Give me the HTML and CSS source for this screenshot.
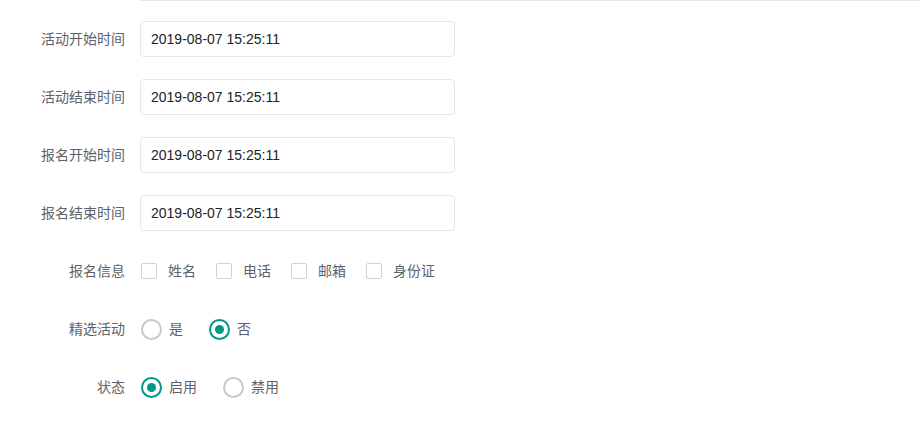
FILE: index.html
```html
<!DOCTYPE html>
<html lang="zh-CN">
<head>
<meta charset="utf-8">
<title>活动表单</title>
<link rel="stylesheet" href="styles.css">
</head>
<body>
<div class="form">
  <div class="prev-row"><div class="prev-input"></div></div>

  <div class="row">
    <label class="label">活动开始时间</label>
    <div class="field"><div class="input">2019-08-07 15:25:11</div></div>
  </div>
  <div class="row">
    <label class="label">活动结束时间</label>
    <div class="field"><div class="input">2019-08-07 15:25:11</div></div>
  </div>
  <div class="row">
    <label class="label">报名开始时间</label>
    <div class="field"><div class="input">2019-08-07 15:25:11</div></div>
  </div>
  <div class="row">
    <label class="label">报名结束时间</label>
    <div class="field"><div class="input">2019-08-07 15:25:11</div></div>
  </div>

  <div class="row">
    <label class="label">报名信息</label>
    <div class="field options check-group">
      <span class="check"><span class="box"></span><span class="opt-text">姓名</span></span>
      <span class="check"><span class="box"></span><span class="opt-text">电话</span></span>
      <span class="check"><span class="box"></span><span class="opt-text">邮箱</span></span>
      <span class="check"><span class="box"></span><span class="opt-text">身份证</span></span>
    </div>
  </div>

  <div class="row">
    <label class="label">精选活动</label>
    <div class="field options radio-group">
      <span class="radio"><span class="circle"></span><span class="opt-text">是</span></span>
      <span class="radio on"><span class="circle"></span><span class="opt-text">否</span></span>
    </div>
  </div>

  <div class="row">
    <label class="label">状态</label>
    <div class="field options radio-group">
      <span class="radio on"><span class="circle"></span><span class="opt-text">启用</span></span>
      <span class="radio"><span class="circle"></span><span class="opt-text">禁用</span></span>
    </div>
  </div>
</div>
</body>
</html>
```

FILE: styles.css
```css
* { box-sizing: border-box; }
html, body {
  margin: 0;
  padding: 0;
  background: #fff;
}
body {
  font-family: "Liberation Sans", "Noto Sans CJK SC", Arial, sans-serif;
  font-size: 14px;
  color: #333;
  width: 920px;
  height: 433px;
  overflow: hidden;
}
.form {
  display: flex;
  flex-direction: column;
  gap: 22px;
}
.prev-row {
  padding-left: 140px;
  margin-bottom: -2px;
}
.prev-input {
  height: 1px;
  border-bottom: 1px solid #e6e6e6;
}
.row {
  display: flex;
  align-items: center;
  height: 36px;
}
.label {
  width: 140px;
  flex: none;
  padding-right: 15px;
  text-align: right;
  color: #5e6268;
  font-size: 14px;
  line-height: 20px;
}
.field {
  flex: none;
}
.input {
  width: 315px;
  height: 36px;
  border: 1px solid #e6e6e6;
  border-radius: 4px;
  padding: 0 10px;
  line-height: 34px;
  color: #222;
  font-size: 14px;
}
.options {
  display: flex;
  align-items: center;
}
.check-group { gap: 19px; }
.radio-group { gap: 25px; }
.check, .radio {
  display: flex;
  align-items: center;
}
.check .box {
  width: 16px;
  height: 16px;
  border: 1px solid #d2d2d2;
  border-radius: 2px;
  margin-left: 1px;
  margin-right: 11px;
  background: #fff;
}
.opt-text {
  color: #5e6268;
  font-size: 14px;
  line-height: 20px;
}
.radio .circle {
  width: 21px;
  height: 21px;
  border: 2px solid #c9c9c9;
  border-radius: 50%;
  margin-left: 1px;
  margin-right: 7px;
  display: flex;
  align-items: center;
  justify-content: center;
}
.radio.on .circle {
  border-color: #009688;
}
.radio.on .circle::after {
  content: "";
  width: 9px;
  height: 9px;
  border-radius: 50%;
  background: #009688;
}
```
